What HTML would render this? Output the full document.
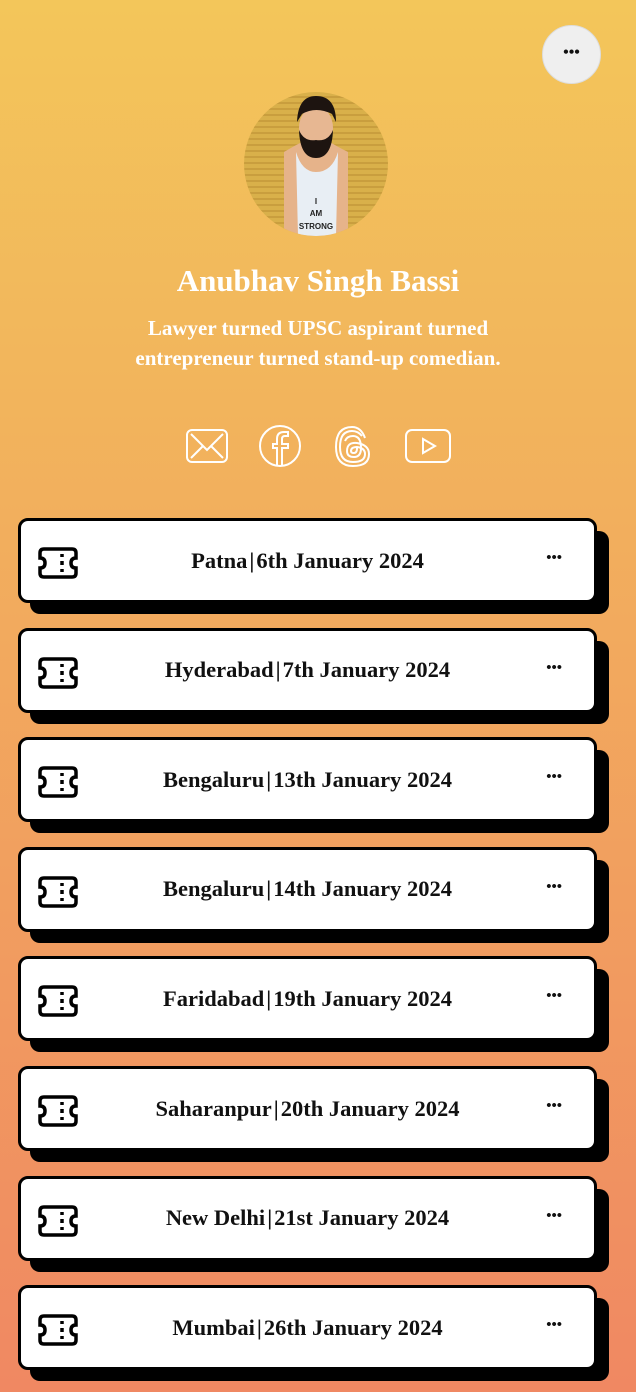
<!DOCTYPE html>
<html><head><meta charset="utf-8"><style>
*{margin:0;padding:0;box-sizing:border-box}
html,body{width:636px;height:1392px;overflow:hidden}
body{background:linear-gradient(#f3c65a,#f08862);font-family:"Liberation Serif","DejaVu Serif",serif;position:relative}
.menu{position:absolute;left:542px;top:25px;width:59px;height:59px;border-radius:50%;background:#efefef;border:1px solid #ddd;text-align:center;line-height:54px;font-size:16px;font-weight:bold;color:#111;letter-spacing:0}
.av{position:absolute;left:244px;top:92px;width:144px;height:144px;border-radius:50%;overflow:hidden;background:repeating-linear-gradient(#d9b04a 0 4px,#c99e3e 4px 6px)}
h1{position:absolute;top:263px;width:100%;text-align:center;color:#fff;font-size:31px;font-weight:bold}
.bio{position:absolute;top:313px;width:100%;text-align:center;color:#fff;font-size:21px;font-weight:bold;line-height:30px}
.icons{position:absolute;top:424px;left:0;width:100%;display:flex;justify-content:center;gap:29px}
.card{position:absolute;left:18px;width:579px;height:85px}
.card .sh{position:absolute;left:12px;top:13px;width:579px;height:83px;background:#000;border-radius:10px}
.card .f{position:absolute;inset:0;background:#fff;border:3px solid #000;border-radius:10px;display:flex;align-items:center;justify-content:center;font-size:22.5px;font-weight:bold;color:#111}
.card .t{position:absolute;left:17px;top:26px}
.card .d{position:absolute;right:32px;top:29px;font-size:15px;letter-spacing:0}
</style></head><body>
<div class="menu">•••</div>
<div class="av"><svg width="144" height="144" viewBox="0 0 144 144">
<path d="M40 60 L40 144 L104 144 L104 60 Q92 54 86 50 L58 50 Q50 54 40 60Z" fill="#e6b38a"/>
<path d="M52 60 L54 144 L92 144 L94 60 Q88 80 72 80 Q58 80 52 60Z" fill="#e8eef4"/>
<ellipse cx="72" cy="36" rx="17" ry="22" fill="#e7b792"/>
<path d="M53 30 Q54 4 72 4 Q92 4 92 30 L88 22 Q72 14 58 22Z" fill="#1d1410"/>
<path d="M55 38 Q56 66 72 66 Q88 66 89 38 Q84 50 72 48 Q60 50 55 38Z" fill="#1d1410"/>
<text x="72" y="112" font-size="8" text-anchor="middle" font-family="Liberation Sans" font-weight="bold" fill="#222">I</text>
<text x="72" y="124" font-size="8" text-anchor="middle" font-family="Liberation Sans" font-weight="bold" fill="#222">AM</text>
<text x="72" y="137" font-size="8" text-anchor="middle" font-family="Liberation Sans" font-weight="bold" fill="#222">STRONG</text>
</svg></div>
<h1>Anubhav Singh Bassi</h1>
<div class="bio">Lawyer turned UPSC aspirant turned<br>entrepreneur turned stand-up comedian.</div>
<div class="icons">
<svg width="44" height="44" viewBox="0 0 44 44" fill="none" stroke="#fff" stroke-width="2"><rect x="2" y="6" width="40" height="32" rx="5"/><path d="M6 10 L22 26 L38 10 M6 34 L18 22 M38 34 L26 22"/></svg>
<svg width="44" height="44" viewBox="0 0 44 44" fill="none" stroke="#fff" stroke-width="2"><circle cx="22" cy="22" r="20"/><path d="M24 42 V24 H30 V20 H24 V15 Q24 12 27 12 H30 V8 H26 Q19 8 19 15 V20 H15 V24 H19 V42"/></svg>
<svg width="44" height="44" viewBox="0 0 44 44" fill="none" stroke="#fff" stroke-width="2"><path d="M34 14 Q30 3 21 3 Q5 3 5 23 Q5 42 22 42 Q38 42 38 30 Q38 21 26 19 Q16 18 16 27 Q16 33 23 33 Q30 33 30 24 Q30 12 22 12 Q16 12 14 17"/><path d="M31 12 Q27 7 21 7 Q9 7 9 23 Q9 38 22 38 Q34 38 34 30 Q34 24 26 23 Q20 23 20 27 Q20 29 23 29 Q26 29 26 24"/></svg>
<svg width="48" height="44" viewBox="0 0 48 44" fill="none" stroke="#fff" stroke-width="2"><rect x="2" y="6" width="44" height="32" rx="6"/><path d="M19 15 L31 22 L19 29Z"/></svg>
</div>
<div id="cards"></div>
<script>
var c=["Patna | 6th January 2024","Hyderabad | 7th January 2024","Bengaluru | 13th January 2024","Bengaluru | 14th January 2024","Faridabad | 19th January 2024","Saharanpur | 20th January 2024","New Delhi | 21st January 2024","Mumbai | 26th January 2024"];
var h="";c.forEach(function(t,i){var y=518+i*109.6;h+='<div class="card" style="top:'+y+'px"><div class="sh"></div><div class="f">'+t.replace(" | ",'<span style="margin:0 2px">|</span>')+'<svg class="t" width="40" height="32" viewBox="0 0 40 32" fill="none" stroke="#000" stroke-width="3.5"><path d="M6 2 H34 Q38 2 38 6 V11 Q33 11 33 16 Q33 21 38 21 V26 Q38 30 34 30 H6 Q2 30 2 26 V21 Q7 21 7 16 Q7 11 2 11 V6 Q2 2 6 2Z"/><path d="M24 7 V10 M24 14 V18 M24 22 V25"/></svg><span class="d">•••</span></div></div>';});
document.getElementById("cards").innerHTML=h;
</script>
</body></html>
